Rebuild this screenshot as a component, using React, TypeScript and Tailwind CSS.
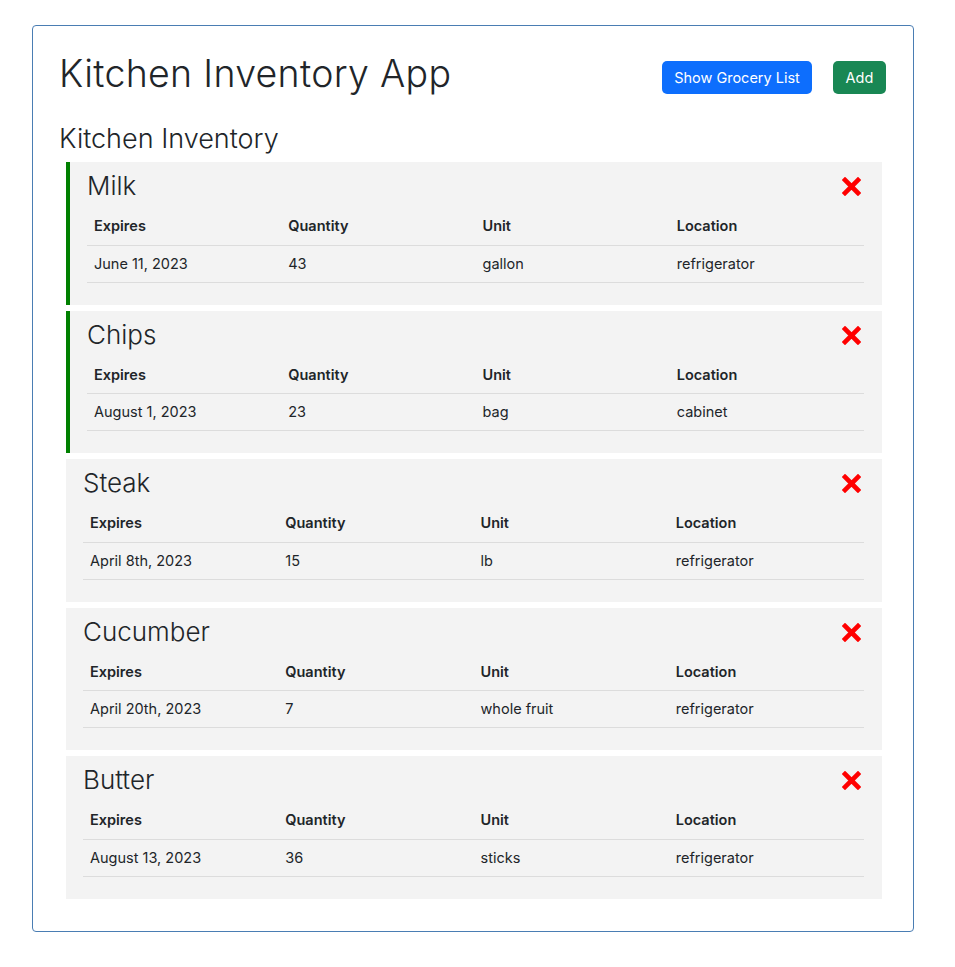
import React from 'react';

// Kitchen inventory list: each item shown as a grey card with a small table

interface Item {
  name: string;
  expires: string;
  quantity: number;
  unit: string;
  location: string;
  flagged: boolean; // green bar on the left
}

const items: Item[] = [
  { name: 'Milk', expires: 'June 11, 2023', quantity: 43, unit: 'gallon', location: 'refrigerator', flagged: true },
  { name: 'Chips', expires: 'August 1, 2023', quantity: 23, unit: 'bag', location: 'cabinet', flagged: true },
  { name: 'Steak', expires: 'April 8th, 2023', quantity: 15, unit: 'lb', location: 'refrigerator', flagged: false },
  { name: 'Cucumber', expires: 'April 20th, 2023', quantity: 7, unit: 'whole fruit', location: 'refrigerator', flagged: false },
  { name: 'Butter', expires: 'August 13, 2023', quantity: 36, unit: 'sticks', location: 'refrigerator', flagged: false },
];

const DeleteIcon = () => (
  <svg width="19" height="19" viewBox="0 0 19 19" className="block">
    <path d="M3 3 L16 16 M16 3 L3 16" stroke="#ff0000" strokeWidth="4.6" strokeLinecap="square" />
  </svg>
);

const ItemCard = ({ item }: { item: Item }) => (
  <div
    className={`bg-[#f3f3f3] pr-[18px] pt-[7px] pb-[22px] ${
      item.flagged ? 'border-l-[4px] border-[#008000] pl-[17px]' : 'pl-[17px]'
    }`}
  >
    <div className="flex items-center justify-between h-[34px]">
      <h4 className="text-[26px] font-light text-[#212529] leading-none">{item.name}</h4>
      <button className="mr-[3px] mt-[1px]">
        <DeleteIcon />
      </button>
    </div>
    <table className="w-full table-fixed mt-[5px] text-[14.5px] text-[#212529]">
      <thead>
        <tr className="border-b border-[#dcdcdc] h-[37px]">
          <th className="text-left font-semibold px-[7px]">Expires</th>
          <th className="text-left font-semibold px-[7px]">Quantity</th>
          <th className="text-left font-semibold px-[7px]">Unit</th>
          <th className="text-left font-semibold px-[7px]">Location</th>
        </tr>
      </thead>
      <tbody>
        <tr className="border-b border-[#dcdcdc] h-[37px]">
          <td className="px-[7px]">{item.expires}</td>
          <td className="px-[7px]">{item.quantity}</td>
          <td className="px-[7px]">{item.unit}</td>
          <td className="px-[7px]">{item.location}</td>
        </tr>
      </tbody>
    </table>
  </div>
);

export default function App() {
  return (
    <div className="bg-white min-h-[967px] pt-[25px] font-['Inter',sans-serif]">
      <div className="ml-[32px] w-[882px] border border-[#4a7db3] rounded-[4px] pl-[26px] pr-[27px] pt-[26px] pb-[32px]">
        <div className="flex items-start justify-between">
          <h1 className="text-[37.5px] font-light text-[#212529] leading-[44px] tracking-[0.3px]">
            Kitchen Inventory App
          </h1>
          <div className="flex gap-[21px] mt-[9px]">
            <button className="bg-[#0d6efd] text-white text-[14.5px] rounded-[5px] h-[33px] w-[150px]">
              Show Grocery List
            </button>
            <button className="bg-[#198754] text-white text-[14.5px] rounded-[5px] h-[33px] w-[53px]">
              Add
            </button>
          </div>
        </div>
        <h3 className="text-[27px] font-light text-[#212529] mt-[26px] leading-[34px]">Kitchen Inventory</h3>
        <div className="flex flex-col gap-[6px] ml-[7px] mr-[4px] mt-[6px]">
          {items.map((item) => (
            <ItemCard key={item.name} item={item} />
          ))}
        </div>
      </div>
    </div>
  );
}
